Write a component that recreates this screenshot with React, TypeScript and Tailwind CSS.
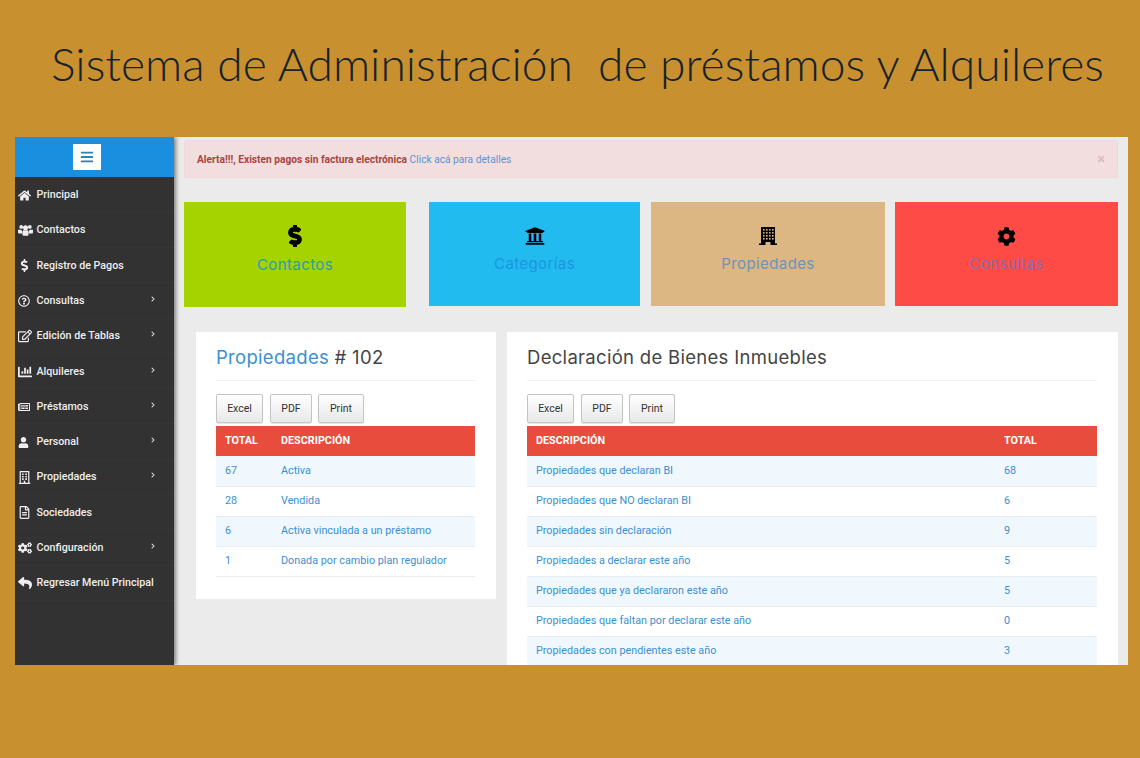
import React from 'react';
import {
  FaHome, FaDollarSign, FaRegQuestionCircle, FaRegEdit, FaChartBar, FaRegNewspaper,
  FaUser, FaRegBuilding, FaRegFileAlt, FaCogs, FaReply, FaChevronRight, FaBars, FaUniversity, FaCog,
} from 'react-icons/fa';

// fa-users from the old icon font, blockier than the one in react-icons
const UsersIcon = ({ size }: { size: number }) => (
  <svg width={size} height={size} viewBox="0 0 16 16" fill="currentColor">
    <circle cx="3.4" cy="4.2" r="2" />
    <circle cx="12.6" cy="4.2" r="2" />
    <circle cx="8" cy="5" r="2.7" />
    <path d="M0 7.2h3.6l1 2.4v1.6H1c-.6 0-1-.4-1-1zM16 7.2h-3.6l-1 2.4v1.6H15c.6 0 1-.4 1-1z" />
    <path d="M4.8 9.4c0-1 .7-1.6 1.5-1.6h3.4c.8 0 1.5.6 1.5 1.6v3.2c0 .6-.4 1-1 1H5.8c-.6 0-1-.4-1-1z" />
  </svg>
);

// fa-building as in the tile: dark block, window grid, wider foot
const BuildingIcon = ({ size }: { size: number }) => (
  <svg width={size} height={size} viewBox="0 0 18 18">
    <path d="M2 0h14v16.5h2V18h-6.5v-3h-5v3H0v-1.500h2z" fill="#000" />
    {[2, 5, 8, 11].map(y => [4, 7, 10, 13].map(x => (
      <rect key={`${x}-${y}`} x={x} y={y} width="1.600" height="1.600" fill="#dcb683" />
    )))}
  </svg>
);

const BoldDollar = ({ size }: { size: number }) => (
  <FaDollarSign size={size} stroke="currentColor" strokeWidth={30} />
);

const menu = [
  { label: 'Principal', icon: FaHome, size: 13 },
  { label: 'Contactos', icon: UsersIcon, size: 15 },
  { label: 'Registro de Pagos', icon: FaDollarSign, size: 13 },
  { label: 'Consultas', icon: FaRegQuestionCircle, size: 12, sub: true },
  { label: 'Edición de Tablas', icon: FaRegEdit, size: 14, sub: true },
  { label: 'Alquileres', icon: FaChartBar, size: 14, sub: true },
  { label: 'Préstamos', icon: FaRegNewspaper, size: 12, sub: true },
  { label: 'Personal', icon: FaUser, size: 11, sub: true },
  { label: 'Propiedades', icon: FaRegBuilding, size: 13, sub: true },
  { label: 'Sociedades', icon: FaRegFileAlt, size: 13 },
  { label: 'Configuración', icon: FaCogs, size: 14, sub: true },
  { label: 'Regresar Menú Principal', icon: FaReply, size: 14 },
];

const tiles = [
  { label: 'Contactos', icon: BoldDollar, cls: 'w-[222px] h-[105px] bg-[#a4d300] text-[#2f9cae]', labelCls: 'mt-[8px]', iconSize: 22 },
  { label: 'Categorías', icon: FaUniversity, cls: 'w-[211px] h-[104px] ml-[23px] bg-[#22bbef] text-[#1a95e2]', labelCls: 'mt-[7px]', iconSize: 20 },
  { label: 'Propiedades', icon: BuildingIcon, cls: 'w-[234px] h-[104px] ml-[11px] bg-[#dcb683] text-[#6b95b8]', labelCls: 'mt-[7px]', iconSize: 18 },
  { label: 'Consultas', icon: FaCog, cls: 'w-[223px] h-[104px] ml-[10px] bg-[#ff4b45] text-[#8d6ca8]', labelCls: 'mt-[7px]', iconSize: 19 },
];

const propiedades = [
  ['67', 'Activa'],
  ['28', 'Vendida'],
  ['6', 'Activa vinculada a un préstamo'],
  ['1', 'Donada por cambio plan regulador'],
];

const declaracion = [
  ['Propiedades que declaran BI', '68'],
  ['Propiedades que NO declaran BI', '6'],
  ['Propiedades sin declaración', '9'],
  ['Propiedades a declarar este año', '5'],
  ['Propiedades que ya declararon este año', '5'],
  ['Propiedades que faltan por declarar este año', '0'],
  ['Propiedades con pendientes este año', '3'],
];

function ExportButtons() {
  const btn = 'border border-[#c4c4c4] rounded-[2px] bg-gradient-to-b from-white to-[#e8e8e8] text-[#333] text-[10.5px] shadow-[0_1px_1px_rgba(0,0,0,0.1)]';
  return (
    <div className="flex mt-[13px] h-[29px]">
      <button className={`${btn} w-[47px]`}>Excel</button>
      <button className={`${btn} w-[42px] ml-[7px]`}>PDF</button>
      <button className={`${btn} w-[46px] ml-[6px]`}>Print</button>
    </div>
  );
}

function DataTable({ head, rows, firstCol }: { head: string[]; rows: string[][]; firstCol: string }) {
  return (
    <table className="w-full mt-[3px] border-collapse table-fixed text-[10.8px]">
      <thead>
        <tr className="h-[30px] bg-[#e74c3c] text-white text-left">
          <th className={`${firstCol} pl-[9px] font-bold`}>{head[0]}</th>
          <th className="pl-[9px] font-bold">{head[1]}</th>
        </tr>
      </thead>
      <tbody>
        {rows.map((r, i) => (
          <tr key={i} className={`h-[30px] border-b border-[#e8eef1] text-[#3c8fd0] ${i % 2 === 0 ? 'bg-[#f1f8fd]' : 'bg-white'}`}>
            <td className="pl-[9px]">{r[0]}</td>
            <td className="pl-[9px]">{r[1]}</td>
          </tr>
        ))}
      </tbody>
    </table>
  );
}

export default function App() {
  return (
    <div className="w-[1140px] h-[758px] overflow-hidden bg-[#c8902f] font-['Roboto',sans-serif]">
      <div className="h-[137px] pl-[51px] pt-[34px]">
        <h1 className="font-['Lato',sans-serif] font-light text-[46.2px] leading-[58px] text-[#16232c] whitespace-pre">
          Sistema de Administración  de préstamos y Alquileres
        </h1>
      </div>

      <div className="ml-[15px] w-[1113px] h-[528px] flex overflow-hidden bg-[#ebebeb]">
        <aside className="w-[159px] shrink-0 bg-[#323232] shadow-[2px_0_4px_rgba(0,0,0,0.45)] z-10">
          <div className="h-[40px] bg-[#1a8fe0] flex items-center justify-center pr-[15px]">
            <div className="w-[28px] h-[26px] bg-white flex items-center justify-center">
              <FaBars className="text-[#2f7fb8] text-[14px]" />
            </div>
          </div>
          <nav className="pt-[0.4px]">
            {menu.map(m => {
              const Icon = m.icon;
              return (
                <div key={m.label} className="h-[35.3px] flex items-center border-b border-[#363636] text-[#eeeeee] text-[10.7px] font-medium pt-[1px]">
                  <span className="w-[18px] pl-[3px] flex justify-start shrink-0 mr-[3.5px]">
                    <Icon size={m.size} />
                  </span>
                  <span className="whitespace-nowrap">{m.label}</span>
                  {m.sub && <FaChevronRight className="ml-auto mr-[18px] mb-[4px] text-[#dddddd]" size={6} />}
                </div>
              );
            })}
          </nav>
        </aside>

        <main className="flex-1 min-w-0 pl-[10px] pr-[10px] pt-[3px]">
          <div className="h-[38px] flex items-center justify-between px-[12px] pt-[1px] bg-[#f2dede] border border-[#eed8da] rounded-[3px] text-[10.2px]">
            <p>
              <b className="text-[#a94442]">Alerta!!!, Existen pagos sin factura electrónica</b>{' '}
              <span className="text-[#5a93d6]">Click acá para detalles</span>
            </p>
            <span className="text-[#d8bcc0] text-[14px] font-bold">×</span>
          </div>

          <div className="flex items-start mt-[24px]">
            {tiles.map(t => {
              const Icon = t.icon;
              return (
                <div key={t.label} className={`${t.cls} flex flex-col items-center pt-[23px]`}>
                  <div className="h-[22px] flex items-center text-black">
                    <Icon size={t.iconSize} />
                  </div>
                  <div className={`${t.labelCls} font-['Inter',sans-serif] text-[15px] tracking-[0.4px] leading-[20px]`}>{t.label}</div>
                </div>
              );
            })}
          </div>

          <div className="flex items-start mt-[25px] ml-[12px] gap-[11px]">
            <section className="w-[300px] h-[267px] bg-white pl-[20px] pr-[21px] shrink-0">
              <h2 className="h-[49px] pt-[3px] flex items-center border-b border-[#f0f0f0] font-['Inter',sans-serif] text-[18.500px] tracking-[0.3px] text-[#444]">
                <span className="text-[#3c8fd0]">Propiedades</span>&nbsp;# 102
              </h2>
              <ExportButtons />
              <DataTable head={['TOTAL', 'DESCRIPCIÓN']} rows={propiedades} firstCol="w-[56px]" />
            </section>
            <section className="flex-1 h-[400px] bg-white pl-[20px] pr-[21px]">
              <h2 className="h-[49px] pt-[3px] flex items-center border-b border-[#f0f0f0] font-['Inter',sans-serif] text-[18.500px] tracking-[0.3px] text-[#444]">
                Declaración de Bienes Inmuebles
              </h2>
              <ExportButtons />
              <DataTable head={['DESCRIPCIÓN', 'TOTAL']} rows={declaracion} firstCol="w-[468px]" />
            </section>
          </div>
        </main>
      </div>
    </div>
  );
}
